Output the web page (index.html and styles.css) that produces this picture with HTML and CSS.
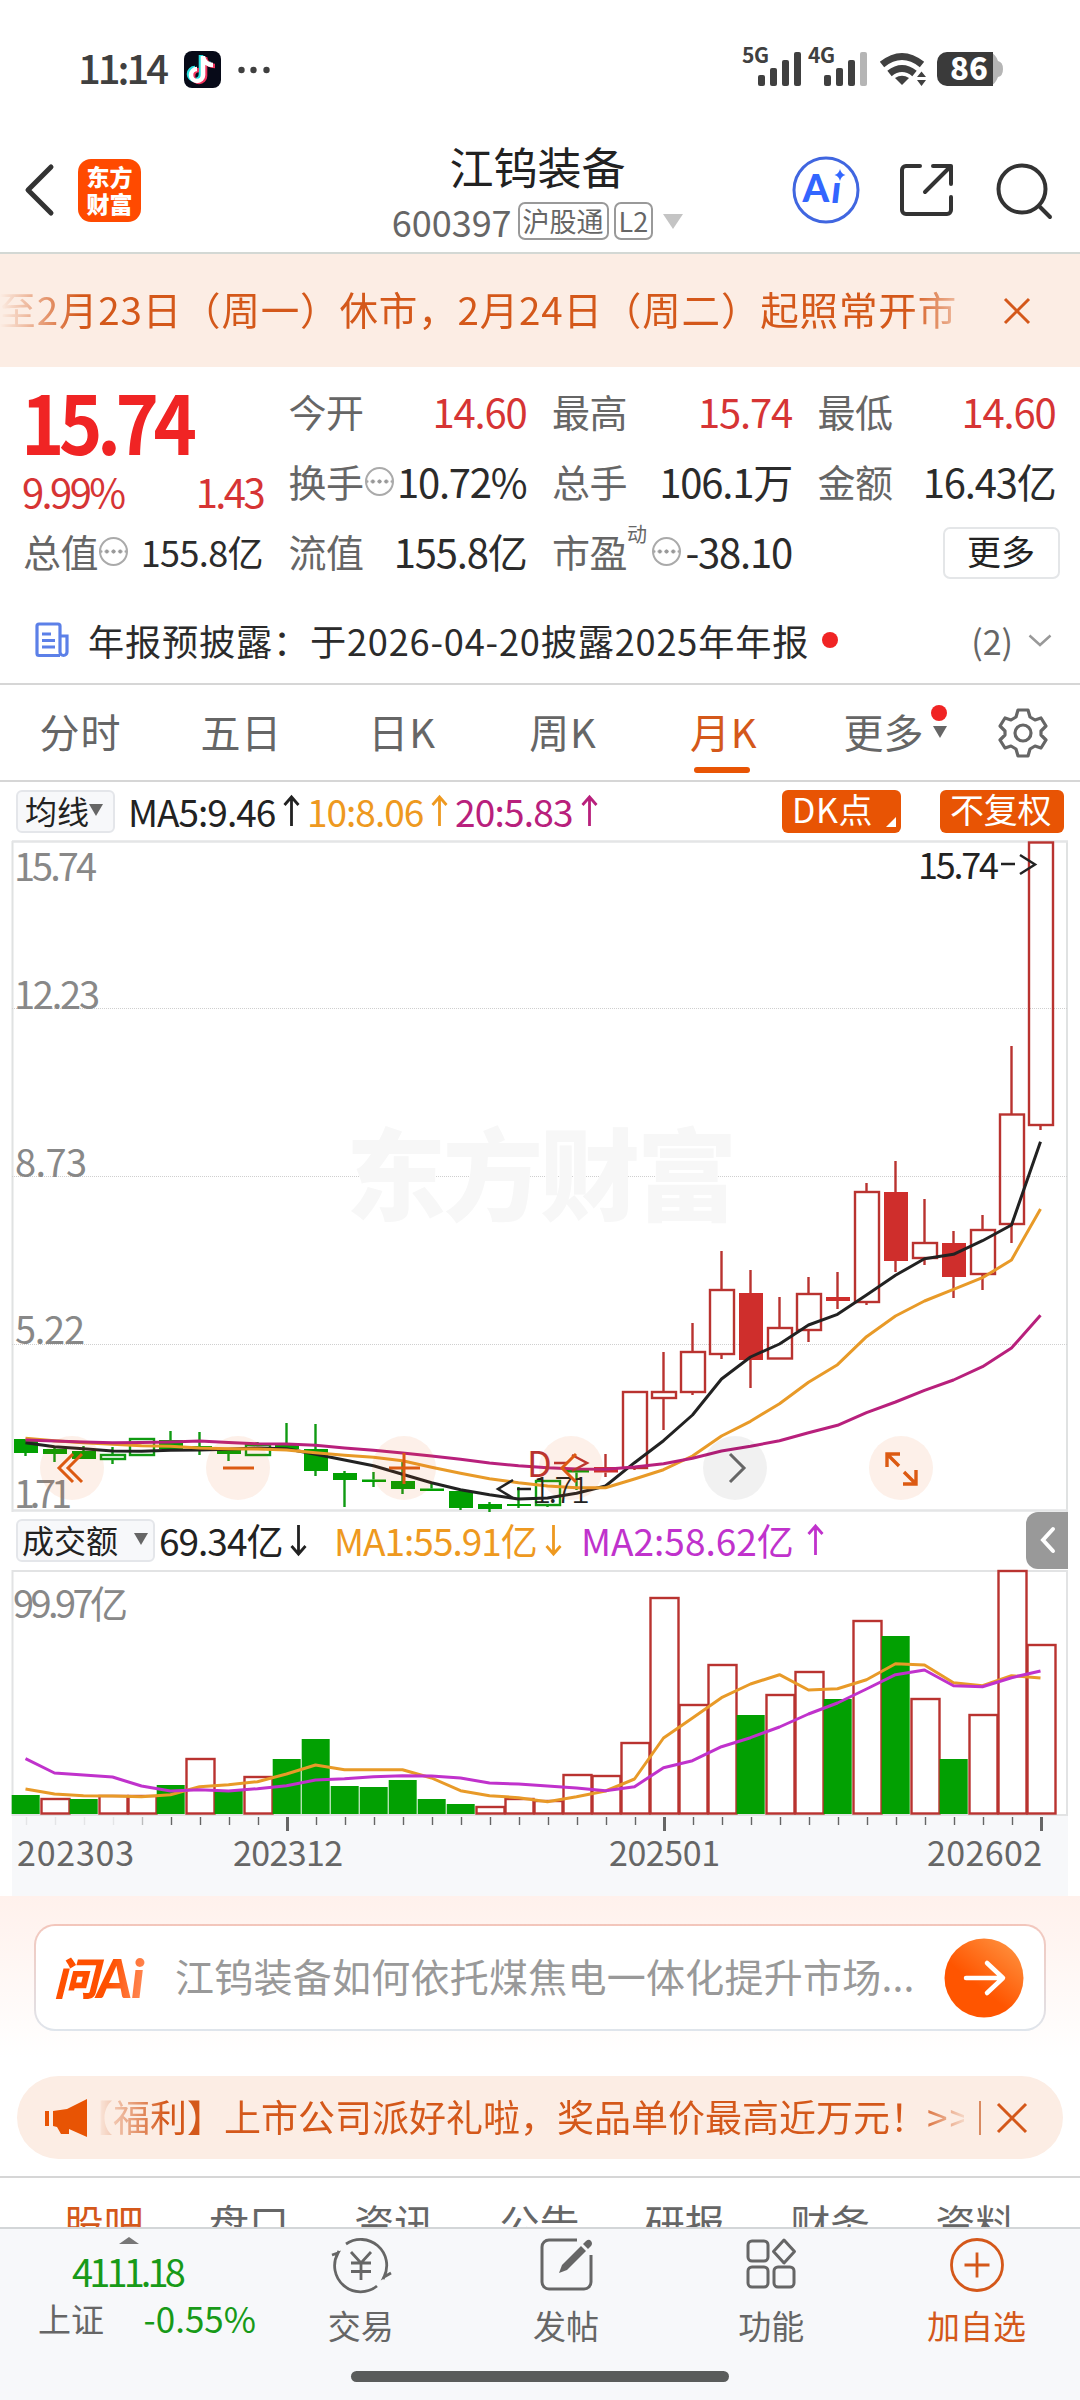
FILE: index.html
```html
<!DOCTYPE html>
<html lang="zh-CN">
<head>
<meta charset="utf-8">
<title>江钨装备 600397</title>
<link rel="stylesheet" href="styles.css">
</head>
<body>
<div class="screen">
  <div class="status">
    <span class="time">11:14</span>
    <svg class="app-ico" width="37" height="37" viewBox="0 0 37 37">
      <rect width="37" height="37" rx="8" fill="#070a18"/>
      <g fill="none" stroke-width="4.6">
        <path d="M18 5v19a6 6 0 1 1-6-6M18 6c1 5 5 8 10 8" stroke="#27e0e0" transform="translate(-1 -1)"/>
        <path d="M20 5v19a6 6 0 1 1-6-6M20 6c1 5 5 8 10 8" stroke="#f2335d" transform="translate(1 1)"/>
        <path d="M19 5v19a6 6 0 1 1-6-6M19 6c1 5 5 8 10 8" stroke="#fff"/>
      </g>
    </svg>
    <svg class="dots" width="32" height="8" viewBox="0 0 32 8" fill="#404040"><circle cx="3.5" cy="4" r="3.2"/><circle cx="15.5" cy="4" r="3.2"/><circle cx="28.5" cy="4" r="3.2"/></svg>
    <svg class="signals" width="266" height="44" viewBox="740 44 266 44">
      <g fill="#404040">
        <text x="742" y="63" class="net">5G</text><text x="808" y="63" class="net">4G</text>
        <rect x="758" y="75" width="7" height="11" rx="2"/><rect x="770" y="68" width="7" height="18" rx="2"/><rect x="782" y="60" width="7" height="26" rx="2"/><rect x="794" y="52" width="7" height="34" rx="2"/>
        <rect x="824" y="75" width="7" height="11" rx="2"/><rect x="836" y="68" width="7" height="18" rx="2"/><rect x="848" y="60" width="7" height="26" rx="2"/><rect x="860" y="52" width="7" height="34" rx="2" fill="#b5b5b5"/>
        <path d="M895 78q7-4.500 14 0l-7 7z"/><path d="M917 77l4.500-5.500 4.500 5.500zM917 80h9l-4.500 6z"/>
      </g>
      <g fill="none" stroke="#404040" stroke-width="7"><path d="M882 64.500q20-16 40 0"/><path d="M889.500 73.500q12.500-10 25 0"/></g>
      <path d="M990 52a12 17 0 0 1 8 9q5 1 5 8t-5 8a12 17 0 0 1-8 9z" fill="#b5b5b5"/>
      <path d="M947 52h46v34h-46a10 10 0 0 1-10-10V62a10 10 0 0 1 10-10z" fill="#3a3a3a"/>
      <text x="950" y="80" class="pct">86</text>
    </svg>
  </div>

  <header class="header">
    <svg width="33" height="54" viewBox="0 0 33 54"><path d="M28 4L5 27l23 23" fill="none" stroke="#333" stroke-width="5" stroke-linecap="round" stroke-linejoin="round"/></svg>
    <div class="logo">东方<br>财富</div>
    <div class="heading">
      <h1>江钨装备</h1>
      <div class="code"><span>600397</span><i class="tag">沪股通</i><i class="tag l2">L2</i><b class="tri"></b></div>
    </div>
    <svg class="ai" width="68" height="68" viewBox="0 0 68 68"><circle cx="34" cy="34" r="32" fill="none" stroke="#4066e0" stroke-width="3"/><text x="10.500" y="46" class="ai-a">A</text><text x="39.500" y="46.500" class="ai-i">ı</text><path d="M48 13q1.200 5 5.500 6-4.300 1-5.500 6-1.200-5-5.500-6 4.300-1 5.500-6z" fill="#3366ff"/></svg>
    <svg class="share" width="56" height="56" viewBox="0 0 56 56" fill="none" stroke="#333" stroke-width="4" stroke-linecap="round" stroke-linejoin="round"><path d="M21 4H7a4 4 0 0 0-4 4v40a4 4 0 0 0 4 4h41a4 4 0 0 0 4-4V35M34 4h18v18M52 4L26 30"/></svg>
    <svg class="search" width="56" height="58" viewBox="0 0 56 58" fill="none" stroke="#333" stroke-width="4" stroke-linecap="round"><circle cx="26" cy="28" r="23.500"/><path d="M43 45l11 11"/></svg>
  </header>

  <div class="banner">
    <div class="marquee">至2月23日（周一）休市，2月24日（周二）起照常开市</div>
    <svg width="26" height="26" viewBox="0 0 26 26"><path d="M1 1l24 24M25 1L1 25" stroke="#d4581a" stroke-width="3"/></svg>
  </div>

  <section class="quote">
    <div class="col first">
      <div class="price">15.74</div>
      <div class="row chg red"><span>9.99%</span><span>1.43</span></div>
      <div class="row"><label>总值<em class="more-dot"></em></label><span class="small">155.8亿</span></div>
    </div>
    <div class="col">
      <div class="row"><label>今开</label><span class="red">14.60</span></div>
      <div class="row"><label>换手<em class="more-dot"></em></label><span>10.72%</span></div>
      <div class="row"><label>流值</label><span>155.8亿</span></div>
    </div>
    <div class="col">
      <div class="row"><label>最高</label><span class="red">15.74</span></div>
      <div class="row"><label>总手</label><span>106.1万</span></div>
      <div class="row"><label>市盈<sup>动</sup><em class="more-dot"></em></label><span>-38.10</span></div>
    </div>
    <div class="col">
      <div class="row"><label>最低</label><span class="red">14.60</span></div>
      <div class="row"><label>金额</label><span>16.43亿</span></div>
      <div class="row end"><button class="more">更多</button></div>
    </div>
  </section>

  <div class="notice">
    <svg width="34" height="36" viewBox="0 0 34 36" fill="none" stroke="#5c80e8" stroke-width="3.200"><path d="M25 33.500H4a2 2 0 0 1-2-2V4a2 2 0 0 1 2-2h19a2 2 0 0 1 2 2v26a3.500 3.500 0 0 0 7 0V14h-7M7 12h9M7 18.500h13M7 25h13"/></svg>
    <p>年报预披露：于2026-04-20披露2025年年报</p><b class="dot"></b>
    <span class="count">(2)</span>
    <svg width="24" height="13" viewBox="0 0 24 13"><path d="M1.500 1.500L12 11 22.500 1.500" fill="none" stroke="#999" stroke-width="2.500"/></svg>
  </div>

  <nav class="periods">
    <a>分时</a><a>五日</a><a>日K</a><a>周K</a><a class="on">月K</a>
    <a class="drop">更多<b class="dot"></b><b class="tri"></b></a>
    <svg width="48" height="50" viewBox="0 0 48 50" fill="none" stroke="#666" stroke-width="3.200" stroke-linejoin="round"><path d="M19 2h10l2 7 5 3 6-2 5 8-5 5v4l5 5-5 8-6-2-5 3-2 7H19l-2-7-5-3-6 2-5-8 5-5v-4l-5-5 5-8 6 2 5-3z"/><circle cx="24" cy="25" r="8"/></svg>
  </nav>

  <div class="ind ma">
    <span class="pick">均线<b class="tri"></b></span>
    <span class="v1">MA5:9.46<svg class="arr" viewBox="0 0 16 32"><path d="M8 31V2M1 10l7-8 7 8"/></svg></span>
    <span class="v2">10:8.06<svg class="arr" viewBox="0 0 16 32"><path d="M8 31V2M1 10l7-8 7 8"/></svg></span>
    <span class="v3">20:5.83<svg class="arr" viewBox="0 0 16 32"><path d="M8 31V2M1 10l7-8 7 8"/></svg></span>
    <span class="chip dk">DK点<i></i></span>
    <span class="chip adj">不复权</span>
  </div>

  <svg class="kchart" width="1080" height="672" viewBox="0 840 1080 672">
    <path d="M12.500 1512V841M1067 1512V841" stroke="#e0e2e2" stroke-width="2" fill="none"/>
    <path d="M12 841.500H1068M12 1510.500H1068" stroke="#e4e5e6" stroke-width="2.500"/>
    <path d="M12 1008.500H1068M12 1176.500H1068M12 1344.500H1068" stroke="#cfcfcf" stroke-dasharray="1 1"/>
    <text x="346" y="1213" class="mark" textLength="391">东方财富</text>
    <g class="axis">
      <text x="14" y="881" textLength="83">15.74</text><text x="14" y="1009" textLength="86">12.23</text><text x="15" y="1177" textLength="72">8.73</text><text x="15" y="1344" textLength="70">5.22</text><text x="14" y="1508" textLength="58">1.71</text>
    </g>
    <g id="candles"></g>
    <g class="tips"><text x="918" y="879" textLength="81">15.74</text><path d="M1001 864h14M1020 855l15 9.500-15 9.500" class="tip-ln"/>
      <path d="M513 1480l-15 9 15 9M517 1489h14" class="tip-ln"/><text x="532" y="1503" textLength="58" class="thin">1.71</text>
      <text x="527" y="1477" class="mark-d">D</text><path d="M554 1463h13M572 1455l15 8-15 8" class="tip-ln r"/></g>
    <g fill="#ee5a10" fill-opacity=".09"><circle cx="72" cy="1468" r="32"/><circle cx="238" cy="1468" r="32"/><circle cx="404" cy="1468" r="32"/><circle cx="571" cy="1468" r="32"/><circle cx="901" cy="1468" r="32"/></g>
    <circle cx="735" cy="1468" r="32" fill="#000" fill-opacity=".055"/>
    <g fill="none" stroke="#dc5a12" stroke-width="3">
      <path d="M73 1454l-14 14 14 14M82 1454l-14 14 14 14M223 1468h31M389 1468h31M404 1453v31M576 1454l-14 14 14 14"/>
      <path d="M887 1467v-13h13M887 1454l12 12M904 1472l12 12M903 1484h13v-14" stroke-width="3.400"/>
    </g>
    <path d="M730 1454l14 14-14 14" fill="none" stroke="#666" stroke-width="3"/>
  </svg>

  <div class="ind vol">
    <span class="pick">成交额<b class="tri"></b></span>
    <span class="v1">69.34亿<svg class="arr" viewBox="0 0 16 32"><path d="M8 1v29M1 22l7 8 7-8"/></svg></span>
    <span class="v2">MA1:55.91亿<svg class="arr" viewBox="0 0 16 32"><path d="M8 1v29M1 22l7 8 7-8"/></svg></span>
    <span class="v4">MA2:58.62亿<svg class="arr" viewBox="0 0 16 32"><path d="M8 31V2M1 10l7-8 7 8"/></svg></span>
    <span class="side"><svg width="16" height="26" viewBox="0 0 16 26"><path d="M13 2L3 13l10 11" fill="none" stroke="#fff" stroke-width="4" stroke-linecap="round"/></svg></span>
  </div>

  <svg class="vchart" width="1080" height="326" viewBox="0 1570 1080 326">
    <rect x="12" y="1816" width="1056" height="80" fill="#f7f8fa"/>
    <path d="M12.500 1815V1571H1067V1815z" stroke="#e2e3e4" stroke-width="2" fill="none"/>
    <g class="axis"><text x="13" y="1618" textLength="115">99.97亿</text></g>
    <g id="volumes"></g>
    <g class="dates"><text x="17" y="1866" textLength="117">202303</text><text x="233" y="1866" textLength="110">202312</text><text x="609" y="1866" textLength="111">202501</text><text x="927" y="1866" textLength="115">202602</text></g>
  </svg>

  <section class="ask">
    <div class="ask-box">
      <span class="ask-logo"><i>问</i>Ai</span>
      <p>江钨装备如何依托煤焦电一体化提升市场...</p>
      <svg width="80" height="80" viewBox="0 0 80 80"><defs><linearGradient id="go" x1="1" y1="0" x2=".2" y2="1"><stop offset="0" stop-color="#ff9a48"/><stop offset=".65" stop-color="#ff5500"/></linearGradient></defs><circle cx="40" cy="40" r="39.500" fill="url(#go)"/><path d="M22 40h36M43 25l16 15-16 15" fill="none" stroke="#fff" stroke-width="4.500" stroke-linecap="round" stroke-linejoin="round"/></svg>
    </div>
  </section>

  <div class="promo">
    <svg width="43" height="38" viewBox="0 0 43 38" fill="#e85404"><path d="M0 12h4v15H0zM8 12l14-2L42 0v38l-18-8v5h-8l-4-7-4-1z"/></svg>
    <p>【福利】上市公司派好礼啦，奖品单价最高近万元！<span>&gt;&gt;</span></p>
    <b class="sep"></b>
    <svg width="30" height="30" viewBox="0 0 30 30"><path d="M1 1l28 28M29 1L1 29" stroke="#d4581a" stroke-width="3"/></svg>
  </div>

  <nav class="subtabs"><a class="on">股吧</a><a>盘口</a><a>资讯</a><a>公告</a><a>研报</a><a>财务</a><a>资料</a></nav>

  <footer class="bottom">
    <div class="index"><b class="up"></b><span class="g num">4111.18</span><div><span>上证</span><span class="g pc">-0.55%</span></div></div>
    <div class="item"><svg width="64" height="58" viewBox="0 0 64 58" fill="none" stroke="#666" stroke-width="2.800"><path d="M17 8A26 26 0 0 1 55 41l7-4M55 41l-1 2M48 50A26 26 0 0 1 9 17l-6 2M9 17l1-2"/><path d="M22 16l10 11 10-11M32 27v17M22 27h20M22 35.500h20"/></svg><span>交易</span></div>
    <div class="item"><svg width="64" height="58" viewBox="0 0 64 58" fill="none" stroke="#666" stroke-width="3"><path d="M43 4H15a7 7 0 0 0-7 7v35a7 7 0 0 0 7 7h35a7 7 0 0 0 7-7V19"/><path d="M25 37l3-8L47 10l5 5-19 19z" fill="#666" stroke="none"/><path d="M49 8l3-3q3-2.500 5 0t0 5l-3 3z" fill="#666" stroke="none"/></svg><span>发帖</span></div>
    <div class="item"><svg width="64" height="58" viewBox="0 0 64 58" fill="none" stroke="#666" stroke-width="3"><rect x="9" y="5" width="20" height="20" rx="4"/><rect x="9" y="31" width="20" height="20" rx="4"/><rect x="35" y="31" width="20" height="20" rx="4"/><path d="M45 4l10.500 11.500L45 27 34.500 15.500z" stroke-linejoin="round"/></svg><span>功能</span></div>
    <div class="item on"><svg width="64" height="58" viewBox="0 0 64 58" fill="none" stroke="#d4581a" stroke-width="2.800"><circle cx="32" cy="29" r="25.500"/><path d="M32 16.500v25M19.500 29h25"/></svg><span>加自选</span></div>
  </footer>
  <div class="home"><i></i></div>
</div>
<script src="chart.js"></script>
</body>
</html>
```
FILE: styles.css
```css
* { box-sizing: border-box; }
body { margin: 0; background: #fff; font-family: "Noto Sans CJK SC", "Noto Sans", sans-serif; color: #2b2b2b; }
.screen { width: 1080px; height: 2400px; overflow: hidden; display: flex; flex-direction: column; }
.screen > * { flex: none; }
svg { flex: none; display: block; overflow: visible; }
h1, p { margin: 0; }
i, em { font-style: normal; }
.tri { display: inline-block; width: 0; height: 0; border: 7px solid transparent; border-bottom: 0; border-top: 12px solid #666; }
.dot { width: 16px; height: 16px; border-radius: 50%; background: #f02424; }
.red { color: #d63434; }

.status { height: 140px; padding: 0 74px 0 78px; display: flex; align-items: flex-start; }
.time { font-size: 40px; font-weight: 500; letter-spacing: -3px; line-height: 60px; margin-top: 37px; width: 106px; color: #404040; }
.app-ico { margin-top: 51px; }
.dots { margin: 66px 0 0 17px; }
.signals { margin: 44px 0 0 auto; }
.net { font-size: 21px; font-weight: 700; letter-spacing: -.5px; }
.pct { font-size: 31px; font-weight: 900; fill: #fff; }

.header { height: 114px; border-bottom: 2px solid #d3d8d4; padding: 0 28px 12px 23px; display: flex; align-items: center; }
.logo { width: 63px; height: 63px; margin-left: 22px; border-radius: 13px; background: #ff4a00; color: #fff; font-weight: 900; font-size: 23px; line-height: 27px; text-align: center; padding-top: 4px; }
.heading { flex: 1; padding-left: 142px; text-align: center; }
.heading h1 { font-size: 44px; line-height: 54px; font-weight: 400; color: #222; margin-top: 4px; }
.code { display: flex; align-items: center; justify-content: center; height: 48px; margin-top: 4px; font-size: 36px; color: #666; }
.code span { letter-spacing: 0; }
.tag { height: 38px; margin-left: 6px; padding: 0 3px; border: 2px solid #999; border-radius: 7px; font-size: 27px; line-height: 33px; }
.tag.l2 { margin-left: 5px; padding: 0 3px; }
.code .tri { margin-left: 10px; border-width: 15px 10px 0; border-top-color: #c4c4c4; }
.ai { margin-right: 39px; }
.ai-a { font: 900 38px Lato; fill: #3366ff; }
.ai-i { font: italic 900 38px Lato; fill: #3366ff; }
.share { margin-right: 41px; }

.banner { height: 113px; background: #fcede4; display: flex; align-items: center; color: #d4581a; }
.marquee { width: 957px; margin-right: 47px; overflow: hidden; display: flex; justify-content: flex-end; white-space: nowrap; font-size: 38.500px; line-height: 58px; padding-bottom: 5px; letter-spacing: .85px; -webkit-mask-image: linear-gradient(90deg, transparent, #000 80px, #000 910px, rgba(0,0,0,.35)); mask-image: linear-gradient(90deg, transparent, #000 80px, #000 910px, rgba(0,0,0,.35)); }

.quote { height: 228px; padding: 9px 24px 0 25px; display: grid; grid-template-columns: 238px 238px 240px 238px; column-gap: 25.500px; font-size: 40px; letter-spacing: -1.200px; }
.row { height: 70px; display: flex; align-items: center; justify-content: space-between; line-height: 60px; white-space: nowrap; }
.row label { display: flex; align-items: center; position: relative; font-size: 38px; letter-spacing: -.5px; color: #666; }
.row.end { justify-content: flex-end; padding-top: 3px; }
.price { height: 85px; line-height: 87px; font-size: 81px; font-weight: 700; letter-spacing: -6px; margin-left: -4px; color: #f02424; transform: scaleX(.91); transform-origin: left; }
.chg { height: 55px; padding-top: 5px; letter-spacing: -2.600px; margin-left: -3px; }
.first label { margin-left: -2px; }
.small { font-size: 36px; letter-spacing: -.6px; }
.more-dot { width: 29px; height: 29px; margin-left: 1px; border: 2px solid #aaa; border-radius: 50%; background: radial-gradient(circle at center, #999 1.800px, transparent 2.300px) 2.500px 0 / 6.700px 25px repeat-x; background-clip: padding-box; }
sup { width: 24px; font-size: 20px; line-height: 20px; align-self: flex-start; margin-top: 3px; }
.more { width: 117px; height: 52px; margin-right: -4px; padding: 0 0 3px; border: 2px solid #e4e6e8; border-radius: 7px; background: #fff; font: 34px/44px "Noto Sans CJK SC"; color: #222; }

.notice { height: 90px; border-bottom: 2px solid #d6d6d6; padding: 2px 28px 0 35px; display: flex; align-items: center; }
.notice p { margin-left: 19px; font-size: 36.200px; white-space: nowrap; line-height: 54px; letter-spacing: .8px; }
.notice .dot { margin-left: 13px; }
.count { margin-left: auto; margin-right: 15px; font-size: 34px; color: #666; }

.periods { height: 97px; border-bottom: 2px solid #d6d6d6; padding: 0 33px 0 0; display: flex; align-items: center; font-size: 40px; color: #666; }
.periods a { width: 161px; height: 95px; line-height: 92px; text-align: center; letter-spacing: .8px; }
.periods a.on { color: #d4581a; position: relative; }
.on::after { content: ""; position: absolute; left: 51px; bottom: 7px; width: 56px; height: 6px; border-radius: 3px; background: #e85404; }
.periods .drop { width: 195px; position: relative; padding-right: 36px; letter-spacing: 0; }
.drop .dot { position: absolute; left: 127px; top: 20px; }
.drop .tri { position: absolute; left: 129px; top: 41px; }

.ind { height: 58px; display: flex; align-items: center; font-size: 37px; line-height: 50px; letter-spacing: -1px; white-space: nowrap; color: #222; }
.ind > span { display: flex; align-items: center; }
.pick { height: 43px; padding: 0 7px 3px; border: 2px solid #e4e6ea; border-radius: 6px; background: #f7f8fa; font-size: 32px; letter-spacing: 0; }
.arr { width: 17px; height: 32px; margin-left: 8px; fill: none; stroke: currentColor; stroke-width: 2.800; }
.v2 { color: #ee9920; }
.v3 { color: #b8207c; }
.v4 { color: #c032cc; }
.ma .pick { width: 99px; margin-left: 16px; }
.ma .v1 { width: 179px; margin-left: 13px; }
.ma .v2 { width: 148px; }
.ma .v3 { letter-spacing: -.8px; }
.chip { height: 43px; border-radius: 6px; background: #e85404; color: #fff; font-size: 34px; letter-spacing: -.2px; padding: 0 10px 4px; position: relative; }
.dk { width: 119px; margin-left: auto; letter-spacing: .6px; }
.dk i { position: absolute; right: 5px; bottom: 6px; border: 5px solid #fff; border-top-color: transparent; border-left-color: transparent; }
.adj { width: 124px; margin: 0 16px 0 39px; }
.vol { padding-bottom: 2px; }
.vol .pick { width: 139px; margin-left: 16px; justify-content: space-between; padding: 0 5px 3px 4px; }
.vol .v1 { width: 175px; margin-left: 4px; }
.vol .v2 { width: 247px; }
.vol .v4 { letter-spacing: 0; }
.vol .v4 .arr { margin-left: 13px; }
.vol .side { width: 42px; height: 57px; margin: 0 12px 0 auto; padding-left: 14px; background: #999; border-radius: 12px 0 0 12px; }

.axis text { font-size: 38px; fill: #888; }
.dates text { font-size: 34px; fill: #666; }
.mark { font-size: 100px; font-weight: 900; fill: #f7f7f7; }
.tips text { font-size: 36px; fill: #222; }
.tips .thin { font-weight: 300; }
.tips .mark-d { fill: #b93330; }
.tip-ln { fill: none; stroke: #222; stroke-width: 2.500; }
.tip-ln.r { stroke: #b93330; }
.ln { fill: none; stroke-width: 3; stroke-linejoin: round; }

.ask { height: 180px; padding: 28px 34px 0; background: linear-gradient(#fff1ec, #fff 90%); position: relative; }
.ask-box { height: 107px; border: 2px solid transparent; border-radius: 21px; background: linear-gradient(#fff, #fff) padding-box, linear-gradient(#f3c6bb, #dfe5ec) border-box; display: flex; align-items: center; padding: 0 20px; }
.ask-logo { width: 98px; height: 60px; display: flex; align-items: center; font: italic 900 54px/60px Lato, "Noto Sans CJK SC"; letter-spacing: -1.200px; margin-left: -2px; background: linear-gradient(100deg, #ff5000 55%, #ff9a70); -webkit-background-clip: text; background-clip: text; color: transparent; }
.ask-logo i { font-size: 44px; font-style: italic; }
.ask-box p { width: 755px; margin-left: 23px; font-size: 39px; letter-spacing: .25px; color: #999; white-space: nowrap; line-height: 58px; padding-bottom: 5px; }
.ask-box > svg { margin-left: 15px; }

.promo { height: 83px; margin: 0 17px 17px; border-radius: 42px; background: #fcede4; color: #d4581a; display: flex; align-items: center; padding: 0 36px 0 28px; }
.promo p { width: 870px; margin-left: 8px; overflow: hidden; white-space: nowrap; font-size: 37px; line-height: 56px; padding-bottom: 4px; text-indent: -20px; -webkit-mask-image: linear-gradient(90deg, transparent, #000 70px, #000 820px, rgba(0,0,0,.15)); mask-image: linear-gradient(90deg, transparent, #000 70px, #000 820px, rgba(0,0,0,.15)); }
.promo p span { letter-spacing: 2px; }
.sep { width: 2px; height: 34px; margin: 0 16px 0 15px; background: #d98a60; }

.subtabs { height: 51px; border-top: 2px solid #d6d6d6; overflow: hidden; display: flex; padding-left: 31px; font-size: 40px; line-height: 60px; color: #666; }
.subtabs a { width: 145.300px; padding-top: 14px; text-align: center; height: 80px; }
.subtabs .on { color: #d4581a; }
.subtabs .on::after { display: none; }

.bottom { height: 140px; border-top: 2px solid #d3d6d8; background: #f7f8fa; display: flex; color: #666; }
.index { width: 258px; display: flex; flex-direction: column; align-items: center; font-size: 33px; line-height: 46px; }
.up { border: 10px solid transparent; border-top: 0; border-bottom: 7px solid #777; margin-top: 8px; height: 0; }
.index .num { font-size: 38px; letter-spacing: -3.900px; margin-top: 3px; margin-left: -4px; line-height: 48px; }
.index div { width: 218px; margin: 0 0 0 38px; align-self: flex-start; display: flex; justify-content: space-between; }
.index .pc { font-size: 35px; }
.g { color: #189a18; }
.item { width: 205.300px; display: flex; flex-direction: column; align-items: center; padding-top: 7px; font-size: 33px; line-height: 48px; }
.item span { margin-top: 7px; }
.item.on { color: #d4581a; position: relative; }
.item.on::after { display: none; }
.home { flex: 1; background: #f7f8fa; padding: 4px 0 0 351px; }
.home i { display: block; width: 378px; height: 11px; border-radius: 6px; background: #5a5c5b; }
```
FILE: chart.js
```js
const step = 29, x0 = 26;
const RED = '#b93330', FILL = '#cf2e2c', GREEN = '#02a002';

// [type, body top, body bottom, high, low]; g/r = solid, G/R = hollow
const candles = [
  ['g',1439,1453,1439,1456],['g',1449,1454,1448,1462],['g',1451,1459,1446,1459],['G',1455,1459,1447,1464],
  ['G',1439,1455,1439,1455],['g',1440,1449,1431,1449],['g',1446,1448,1432,1455],['g',1449,1454,1449,1461],
  ['G',1445,1455,1442,1455],['g',1445,1449,1423,1449],['g',1449,1471,1424,1476],['g',1473,1480,1471,1507],
  ['g',1479.5,1482,1472,1487],['g',1481,1489,1462,1494],['g',1488.5,1491,1483,1491],['g',1491,1508,1491,1510],
  ['g',1504,1509,1502,1512],['g',1504,1506,1487,1508],['G',1481,1505,1481,1507],['g',1470,1472.5,1470,1490],
  ['r',1467,1472.5,1454,1477],['R',1392,1468,1392,1470],['R',1392,1398,1352,1430],['R',1352,1392,1323,1395],
  ['R',1290,1354,1251,1359],['r',1293,1360,1270,1388],['R',1328,1358.5,1297,1359],['R',1294,1330,1277,1342],
  ['r',1297,1301,1272,1309],['R',1192,1302,1183,1305],['r',1192,1261,1161,1272],['R',1243,1258,1199,1265],
  ['r',1243,1277,1231,1298],['R',1230,1274,1215,1290],['R',1114.5,1224,1046,1243],['R',842.5,1125,842.5,1130]
];
const ma5 = [1442.7,1446.7,1448.7,1451,1451.3,1450.3,1450,1449.3,1448,1448.7,1454.3,1460,1465.7,1474.3,1482.7,1489.7,1494.7,1499,1498,1493.3,1486,1462.7,1440.7,1415,1379,1357,1344,1325,1314.3,1295,1275.3,1258.7,1254.3,1240.7,1225,1141.7];
const ma10 = [1438.3,1440.7,1442.7,1444.3,1445.7,1446.3,1448,1448.7,1449,1450,1452.7,1455.3,1457.3,1460.7,1467.3,1473.3,1478.7,1482.7,1486,1487.7,1487.7,1479,1469.7,1456,1436,1421.3,1403.7,1382.3,1364.7,1336.7,1316,1301,1289.3,1277.7,1260,1209];
const ma20 = [1440,1441,1442,1442.7,1442.5,1442,1441,1442.5,1443.7,1444,1445.3,1448,1450.3,1453,1456,1459.3,1463,1465.7,1467.7,1469,1469.3,1467,1463.7,1458.3,1451,1446.3,1440.7,1432.7,1425.3,1412.7,1402,1390.3,1380,1366.7,1348,1315.3];

const volumes = [[1,1795],[0,1799],[1,1799],[0,1796],[0,1796],[1,1785],[0,1759],[1,1791],[0,1777],[1,1759],[1,1739],[1,1786],[1,1787],[1,1780],[1,1799],[1,1804],[0,1807],[0,1799],[0,1801],[0,1775],[0,1776],[0,1743],[0,1598],[0,1705],[0,1665],[1,1715],[0,1695],[0,1672],[1,1699],[0,1621],[1,1636],[0,1699],[1,1759],[0,1715],[0,1571],[0,1645]];
const vma1 = [1789,1794,1795.7,1796,1796.7,1794.7,1786.7,1784.7,1781.7,1774,1765,1769.7,1769.7,1769.7,1778,1790.7,1795.7,1797.7,1801.7,1796.7,1791,1779,1738,1718,1697.7,1684,1674.7,1690,1688.7,1679.7,1663.7,1665,1682.7,1685.7,1675.7,1678];
const vma2 = [1758.7,1773,1775,1777,1786,1791,1789.7,1791,1788.7,1785.7,1780,1778.7,1776.7,1775.7,1776,1778,1783,1784,1786,1788,1790.7,1786.7,1767.7,1760.7,1746.7,1737.7,1727,1714,1703,1689,1674.7,1670,1685.7,1686.7,1677.7,1671];

const rect = (x, y, w, h, fill, stroke) =>
  `<rect x="${x}" y="${y}" width="${w}" height="${h}" fill="${fill}" stroke="${stroke || 'none'}" stroke-width="2.4"/>`;
const line = (ys, color) =>
  `<polyline class="ln" stroke="${color}" points="${ys.map((y, i) => (x0 - 0.5 + i * step) + ',' + y).join(' ')}"/>`;

let k = '';
candles.forEach(([t, top, bottom, high, low], i) => {
  const x = x0 + i * step - 0.5;
  const edge = t.toLowerCase() === 'g' ? '#0f9a12' : RED;
  k += `<path d="M${x} ${high}V${top}M${x} ${bottom}V${low}" stroke="${edge}" stroke-width="2.4"/>`;
  k += t === 'g' || t === 'r'
    ? rect(x - 11.5, top, 24, bottom - top, t === 'g' ? GREEN : FILL)
    : rect(x - 11.5, top, 24, bottom - top, 'none', edge);
});
document.getElementById('candles').innerHTML = k + line(ma5, '#222') + line(ma10, '#e89a28') + line(ma20, '#b8207c');

let v = '';
volumes.forEach(([down, y], i) => {
  const x = 11.7 + i * step;
  v += down ? rect(x, y, 28, 1814 - y, GREEN) : rect(x + 0.8, y, 28, 1813.5 - y, '#fff', RED);
  const major = i === 9 || i === 22 || i === 35;
  v += `<path d="M${x0 + i * step + 0.5} 1817v${major ? 14 : 8}" stroke="#666" stroke-width="${major ? 3 : 1.4}" opacity="${i < 4 ? 0.12 : i === 4 ? 0.4 : 1}"/>`;
});
document.getElementById('volumes').innerHTML = v + line(vma1, '#e89a28') + line(vma2, '#c032cc');
```
